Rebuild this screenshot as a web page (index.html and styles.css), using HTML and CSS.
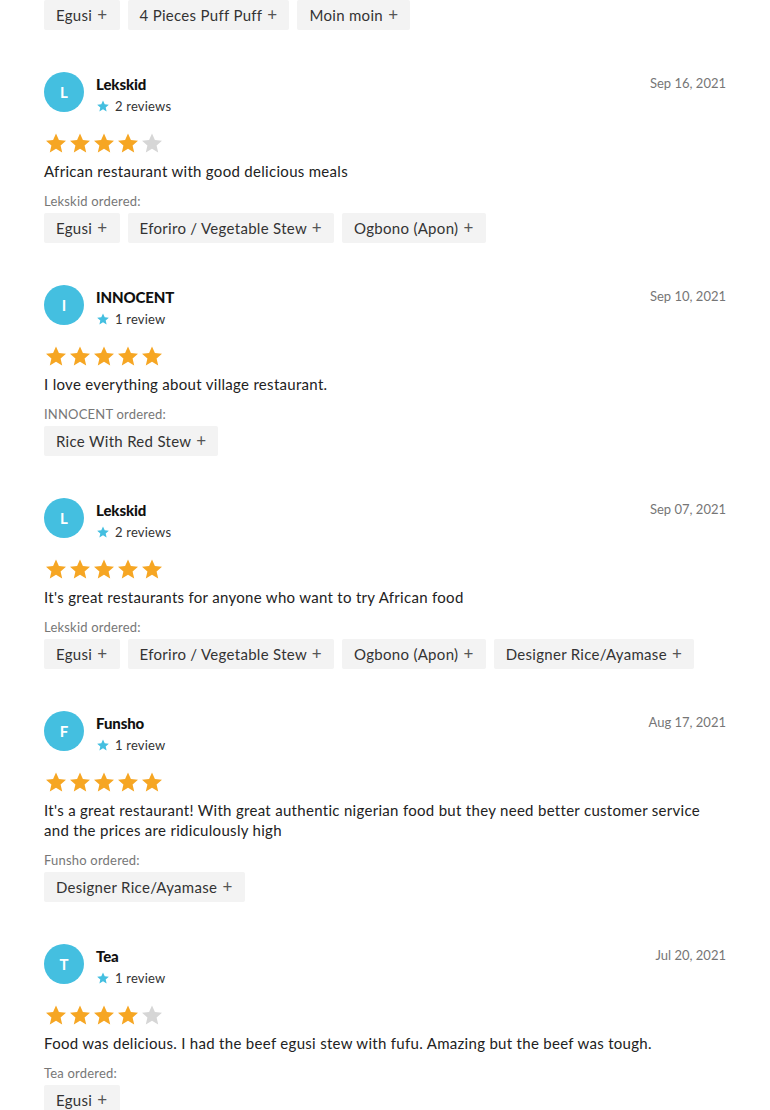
FILE: index.html
```html
<!DOCTYPE html>
<html lang="en">
<head>
	<meta charset="UTF-8">
	<title>Reviews</title>
	<link rel="stylesheet" href="styles.css">
</head>
<body>
	<svg width="0" height="0" class="defs">
		<symbol id="star" viewBox="0 0 24 24">
			<path d="M12 2.5l2.9 6.6 7.1.6-5.4 4.7 1.6 7-6.2-3.7-6.2 3.7 1.6-7L2 9.7l7.1-.6z"/>
		</symbol>
	</svg>

	<div class="reviews">
		<div class="items first">
			<span class="chip">Egusi <i>+</i></span>
			<span class="chip">4 Pieces Puff Puff <i>+</i></span>
			<span class="chip">Moin moin <i>+</i></span>
		</div>

		<div class="review">
			<div class="head">
				<div class="avatar">L</div>
				<div class="who">
					<div class="name">Lekskid</div>
					<div class="count"><svg class="mini"><use href="#star"/></svg>2 reviews</div>
				</div>
				<div class="date">Sep 16, 2021</div>
			</div>
			<div class="stars">
				<svg class="on"><use href="#star"/></svg><svg class="on"><use href="#star"/></svg><svg class="on"><use href="#star"/></svg><svg class="on"><use href="#star"/></svg><svg><use href="#star"/></svg>
			</div>
			<p class="text">African restaurant with good delicious meals</p>
			<div class="label">Lekskid ordered:</div>
			<div class="items">
				<span class="chip">Egusi <i>+</i></span>
				<span class="chip">Eforiro / Vegetable Stew <i>+</i></span>
				<span class="chip">Ogbono (Apon) <i>+</i></span>
			</div>
		</div>

		<div class="review">
			<div class="head">
				<div class="avatar">I</div>
				<div class="who">
					<div class="name">INNOCENT</div>
					<div class="count"><svg class="mini"><use href="#star"/></svg>1 review</div>
				</div>
				<div class="date">Sep 10, 2021</div>
			</div>
			<div class="stars">
				<svg class="on"><use href="#star"/></svg><svg class="on"><use href="#star"/></svg><svg class="on"><use href="#star"/></svg><svg class="on"><use href="#star"/></svg><svg class="on"><use href="#star"/></svg>
			</div>
			<p class="text">I love everything about village restaurant.</p>
			<div class="label">INNOCENT ordered:</div>
			<div class="items">
				<span class="chip">Rice With Red Stew <i>+</i></span>
			</div>
		</div>

		<div class="review">
			<div class="head">
				<div class="avatar">L</div>
				<div class="who">
					<div class="name">Lekskid</div>
					<div class="count"><svg class="mini"><use href="#star"/></svg>2 reviews</div>
				</div>
				<div class="date">Sep 07, 2021</div>
			</div>
			<div class="stars">
				<svg class="on"><use href="#star"/></svg><svg class="on"><use href="#star"/></svg><svg class="on"><use href="#star"/></svg><svg class="on"><use href="#star"/></svg><svg class="on"><use href="#star"/></svg>
			</div>
			<p class="text">It's great restaurants for anyone who want to try African food</p>
			<div class="label">Lekskid ordered:</div>
			<div class="items">
				<span class="chip">Egusi <i>+</i></span>
				<span class="chip">Eforiro / Vegetable Stew <i>+</i></span>
				<span class="chip">Ogbono (Apon) <i>+</i></span>
				<span class="chip">Designer Rice/Ayamase <i>+</i></span>
			</div>
		</div>

		<div class="review">
			<div class="head">
				<div class="avatar">F</div>
				<div class="who">
					<div class="name">Funsho</div>
					<div class="count"><svg class="mini"><use href="#star"/></svg>1 review</div>
				</div>
				<div class="date">Aug 17, 2021</div>
			</div>
			<div class="stars">
				<svg class="on"><use href="#star"/></svg><svg class="on"><use href="#star"/></svg><svg class="on"><use href="#star"/></svg><svg class="on"><use href="#star"/></svg><svg class="on"><use href="#star"/></svg>
			</div>
			<p class="text">It's a great restaurant! With great authentic nigerian food but they need better customer service and the prices are ridiculously high</p>
			<div class="label">Funsho ordered:</div>
			<div class="items">
				<span class="chip">Designer Rice/Ayamase <i>+</i></span>
			</div>
		</div>

		<div class="review">
			<div class="head">
				<div class="avatar">T</div>
				<div class="who">
					<div class="name">Tea</div>
					<div class="count"><svg class="mini"><use href="#star"/></svg>1 review</div>
				</div>
				<div class="date">Jul 20, 2021</div>
			</div>
			<div class="stars">
				<svg class="on"><use href="#star"/></svg><svg class="on"><use href="#star"/></svg><svg class="on"><use href="#star"/></svg><svg class="on"><use href="#star"/></svg><svg><use href="#star"/></svg>
			</div>
			<p class="text">Food was delicious. I had the beef egusi stew with fufu. Amazing but the beef was tough.</p>
			<div class="label">Tea ordered:</div>
			<div class="items">
				<span class="chip">Egusi <i>+</i></span>
			</div>
		</div>
	</div>
</body>
</html>
```

FILE: styles.css
```css
body {
	margin: 0;
	background: #fff;
	font-family: Lato, "Liberation Sans", sans-serif;
	color: #2d2d2d;
}
.defs {
	position: absolute;
}
.reviews {
	width: 682px;
	padding: 0 44px;
}
.items {
	display: flex;
	flex-wrap: wrap;
	gap: 8px;
}
.first {
	margin-bottom: 42px;
}
.chip {
	display: inline-block;
	height: 30px;
	line-height: 30px;
	padding: 0 12px;
	background: #f3f3f3;
	border-radius: 2px;
	font-size: 15px;
	color: #333;
	letter-spacing: 0.3px;
}
.chip i {
	font-style: normal;
	font-size: 17px;
	color: #555;
	margin-left: 1px;
}
.review {
	margin-bottom: 42px;
}
.head {
	display: flex;
	align-items: flex-start;
}
.avatar {
	width: 40px;
	height: 40px;
	border-radius: 50%;
	background: #44bfe0;
	color: #fff;
	font-size: 15px;
	font-weight: 700;
	text-align: center;
	line-height: 40px;
	margin-right: 12px;
}
.who {
	flex: 1;
	padding-top: 2px;
}
.name {
	font-size: 15px;
	font-weight: 900;
	color: #111;
	line-height: 20px;
	letter-spacing: -0.1px;
}
.count {
	font-size: 13px;
	line-height: 18px;
	margin-top: 3px;
	color: #333;
	display: flex;
	align-items: center;
	letter-spacing: 0.2px;
}
.mini {
	width: 14px;
	height: 14px;
	fill: #44bfe0;
	margin-right: 5px;
}
.date {
	font-size: 13px;
	color: #767676;
	padding-top: 3px;
}
.stars {
	display: flex;
	margin-top: 16px;
	height: 24px;
}
.stars svg {
	width: 24px;
	height: 24px;
	fill: #d6d6d6;
}
.stars svg.on {
	fill: #f6a623;
}
.text {
	margin: 6px 0 0;
	font-size: 15px;
	line-height: 20px;
	color: #222;
	letter-spacing: 0.3px;
}
.label {
	margin-top: 11px;
	margin-bottom: 3px;
	font-size: 13px;
	line-height: 18px;
	color: #777;
	letter-spacing: 0.2px;
}
```
